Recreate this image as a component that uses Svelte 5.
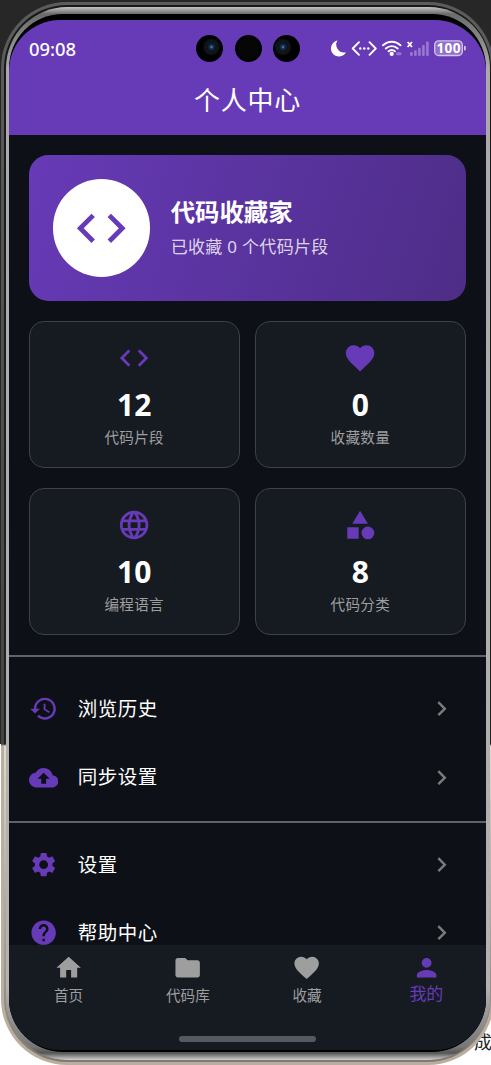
<script>
  const purple = '#673ab7';

  // 图标路径 (24x24)
  const icons = {
    code: 'M9.4 16.6L4.8 12l4.6-4.6L8 6l-6 6 6 6 1.4-1.4zm5.2 0l4.6-4.6-4.6-4.6L16 6l6 6-6 6-1.4-1.4z',
    heart: 'M12 21.35l-1.45-1.32C5.4 15.36 2 12.28 2 8.5 2 5.42 4.42 3 7.5 3c1.74 0 3.41.81 4.5 2.09C13.09 3.81 14.76 3 16.5 3 19.58 3 22 5.42 22 8.5c0 3.78-3.4 6.86-8.55 11.54L12 21.35z',
    globe: 'M11.99 2C6.47 2 2 6.48 2 12s4.47 10 9.99 10C17.52 22 22 17.52 22 12S17.52 2 11.99 2zm6.93 6h-2.95c-.32-1.25-.78-2.45-1.38-3.56 1.84.63 3.37 1.91 4.33 3.56zM12 4.04c.83 1.2 1.48 2.53 1.91 3.96h-3.82c.43-1.43 1.08-2.76 1.91-3.96zM4.26 14C4.1 13.36 4 12.69 4 12s.1-1.36.26-2h3.38c-.08.66-.14 1.32-.14 2s.06 1.34.14 2H4.26zm.82 2h2.95c.32 1.25.78 2.45 1.38 3.56-1.84-.63-3.37-1.9-4.33-3.56zm2.95-8H5.08c.96-1.66 2.49-2.93 4.33-3.56C8.81 5.55 8.35 6.75 8.03 8zM12 19.96c-.83-1.2-1.48-2.53-1.91-3.96h3.82c-.43 1.43-1.08 2.76-1.91 3.96zM14.34 14H9.66c-.09-.66-.16-1.32-.16-2s.07-1.35.16-2h4.68c.09.65.16 1.32.16 2s-.07 1.34-.16 2zm.25 5.56c.6-1.11 1.06-2.31 1.38-3.56h2.95c-.96 1.65-2.49 2.93-4.33 3.56zM16.36 14c.08-.66.14-1.32.14-2s-.06-1.34-.14-2h3.38c.16.64.26 1.31.26 2s-.1 1.36-.26 2h-3.38z',
    category: 'M12 2l-5.5 9h11zM17.5 13a4.5 4.5 0 1 0 0 9 4.5 4.5 0 0 0 0-9zM3 13.5h8v8H3z',
    history: 'M13 3c-4.97 0-9 4.03-9 9H1l3.89 3.89.07.14L9 12H6c0-3.87 3.13-7 7-7s7 3.13 7 7-3.13 7-7 7c-1.93 0-3.68-.79-4.94-2.06l-1.42 1.42C8.27 19.99 10.51 21 13 21c4.97 0 9-4.03 9-9s-4.03-9-9-9zm-1 5v5l4.28 2.54.72-1.21-3.5-2.08V8H12z',
    cloud: 'M19.35 10.04C18.67 6.59 15.64 4 12 4 9.11 4 6.6 5.64 5.35 8.04 2.34 8.36 0 10.91 0 14c0 3.31 2.69 6 6 6h13c2.76 0 5-2.24 5-5 0-2.64-2.05-4.78-4.65-4.96zM14 13v4h-4v-4H7l5-5 5 5h-3z',
    settings: 'M19.14 12.94c.04-.3.06-.61.06-.94 0-.32-.02-.64-.07-.94l2.03-1.58c.18-.14.23-.41.12-.61l-1.92-3.32c-.12-.22-.37-.29-.59-.22l-2.39.96c-.5-.38-1.03-.7-1.62-.94l-.36-2.54c-.04-.24-.24-.41-.48-.41h-3.84c-.24 0-.43.17-.47.41l-.36 2.54c-.59.24-1.13.57-1.62.94l-2.39-.96c-.22-.08-.47 0-.59.22L2.74 8.87c-.12.21-.08.47.12.61l2.03 1.58c-.05.3-.09.63-.09.94s.02.64.07.94l-2.03 1.58c-.18.14-.23.41-.12.61l1.92 3.32c.12.22.37.29.59.22l2.39-.96c.5.38 1.03.7 1.62.94l.36 2.54c.05.24.24.41.48.41h3.84c.24 0 .44-.17.47-.41l.36-2.54c.59-.24 1.13-.56 1.62-.94l2.39.96c.22.08.47 0 .59-.22l1.92-3.32c.12-.22.07-.47-.12-.61l-2.01-1.58zM12 15.6c-1.98 0-3.6-1.62-3.6-3.6s1.62-3.6 3.6-3.6 3.6 1.62 3.6 3.6-1.62 3.6-3.6 3.6z',
    help: 'M12 2C6.48 2 2 6.48 2 12s4.48 10 10 10 10-4.48 10-10S17.52 2 12 2zm1 17h-2v-2h2v2zm2.07-7.75l-.9.92C13.45 12.9 13 13.5 13 15h-2v-.5c0-1.1.45-2.1 1.17-2.83l1.24-1.26c.37-.36.59-.86.59-1.41 0-1.1-.9-2-2-2s-2 .9-2 2H8c0-2.21 1.79-4 4-4s4 1.79 4 4c0 .88-.36 1.68-.93 2.25z',
    home: 'M10 20v-6h4v6h5v-8h3L12 3 2 12h3v8z',
    folder: 'M10 4H4c-1.1 0-1.99.9-1.99 2L2 18c0 1.1.9 2 2 2h16c1.1 0 2-.9 2-2V8c0-1.1-.9-2-2-2h-8l-2-2z',
    person: 'M12 12c2.21 0 4-1.79 4-4s-1.79-4-4-4-4 1.79-4 4 1.79 4 4 4zm0 2c-2.67 0-8 1.34-8 4v2h16v-2c0-2.66-5.33-4-8-4z',
    chevron: 'M10 6L8.59 7.41 13.17 12l-4.58 4.59L10 18l6-6z'
  };

  const stats = [
    { icon: 'code', value: 12, label: '代码片段' },
    { icon: 'heart', value: 0, label: '收藏数量' },
    { icon: 'globe', value: 10, label: '编程语言' },
    { icon: 'category', value: 8, label: '代码分类' }
  ];

  const menus = [
    [
      { icon: 'history', label: '浏览历史' },
      { icon: 'cloud', label: '同步设置' }
    ],
    [
      { icon: 'settings', label: '设置' },
      { icon: 'help', label: '帮助中心' }
    ]
  ];

  const tabs = [
    { icon: 'home', label: '首页' },
    { icon: 'folder', label: '代码库' },
    { icon: 'heart', label: '收藏' },
    { icon: 'person', label: '我的' }
  ];

  let activeTab = 3;
</script>

{#snippet icon(name, size, color)}
  <svg width={size} height={size} viewBox="0 0 24 24" fill={color}>
    <path d={icons[name]} />
  </svg>
{/snippet}

<div class="desktop">
  <span class="behind">成</span>
  <div class="rim">
    <div class="groove">
      <div class="metal">
        <div class="bezel">
          <div class="screen">
            <header>
              <div class="status">
                <span class="time">09:08</span>
                <svg width="140" height="20" viewBox="0 0 140 20">
                  <path fill="#fff" d="M8.5 1.6A8 8 0 1 0 17 13.3A7.8 7.8 0 0 1 8.5 1.6z" />
                  <g fill="none" stroke="#fff" stroke-width="1.9" stroke-linecap="round" stroke-linejoin="round">
                    <path d="M30 3.2L23.7 9.5L30 15.8M40.5 3.2L46.8 9.5L40.5 15.8" />
                    <path d="M54 6.3C59 1.5 66.5 1.5 71.5 6.3M56.8 9.5C60.2 6.3 65.3 6.3 68.7 9.5M59.6 12.3C61.4 10.8 64.1 10.8 65.9 12.3" />
                  </g>
                  <g fill="#fff">
                    <circle cx="31.3" cy="9.5" r="1.2" />
                    <circle cx="35.3" cy="9.5" r="1.2" />
                    <circle cx="39.3" cy="9.5" r="1.2" />
                    <circle cx="62.7" cy="14.9" r="2.1" />
                  </g>
                  <rect x="67" y="13.3" width="5.5" height="3" rx="1.5" fill="#fff" opacity=".3" />
                  <path d="M78.6 3l4.4 5M83 3l-4.4 5" stroke="#fff" stroke-width="1.8" />
                  <g fill="#fff" opacity=".32">
                    <rect x="81.1" y="13" width="2.6" height="4" rx="1" />
                    <rect x="85.1" y="11.2" width="2.6" height="5.8" rx="1" />
                    <rect x="89.1" y="8.8" width="2.6" height="8.2" rx="1" />
                    <rect x="93.1" y="6" width="2.6" height="11" rx="1" />
                    <rect x="97.1" y="2.4" width="2.6" height="14.6" rx="1" />
                  </g>
                  <rect x="105.7" y="1.9" width="27.6" height="14.6" rx="4" fill="#fff" fill-opacity=".28" stroke="#d3c6ec" stroke-width="1.3" />
                  <rect x="135" y="6.8" width="1.8" height="4.6" rx=".9" fill="#d3c6ec" />
                  <text x="119.5" y="14.1" text-anchor="middle" fill="#fff" font-size="13.6" font-weight="700" textLength="24">100</text>
                </svg>
              </div>
              <h1>个人中心</h1>
              <i class="lens left"></i>
              <i class="lens mid"></i>
              <i class="lens right"></i>
            </header>

            <main>
              <section class="profile">
                <div class="avatar">{@render icon('code', 58.5, purple)}</div>
                <div>
                  <h2>代码收藏家</h2>
                  <p>已收藏 0 个代码片段</p>
                </div>
              </section>

              <section class="stats">
                {#each stats as stat}
                  <div class="stat">
                    {@render icon(stat.icon, 34.2, purple)}
                    <strong>{stat.value}</strong>
                    <span>{stat.label}</span>
                  </div>
                {/each}
              </section>

              {#each menus as group}
                <ul>
                  {#each group as item}
                    <li>
                      {@render icon(item.icon, 29.3, purple)}
                      <span>{item.label}</span>
                      {@render icon('chevron', 29.3, '#7b7b7c')}
                    </li>
                  {/each}
                </ul>
              {/each}
            </main>

            <nav>
              <div class="tabs">
                {#each tabs as tab, i}
                  <button class:active={i === activeTab}>
                    {@render icon(tab.icon, 29.3, i === activeTab ? purple : '#9e9e9e')}
                    <span>{tab.label}</span>
                  </button>
                {/each}
              </div>
              <div class="handle"></div>
            </nav>
          </div>
        </div>
      </div>
    </div>
  </div>
</div>

<style>
  .desktop {
    position: relative;
    width: 491px;
    height: 1065px;
    box-sizing: border-box;
    padding: 2px 0 0 1px;
    overflow: hidden;
    background: linear-gradient(#272727 744px, #fff 744px);
    font-family: "Noto Sans", "Noto Sans CJK SC", sans-serif;
    color: #fff;
  }
  .behind {
    position: absolute;
    left: 474px;
    top: 1031px;
    font-size: 18px;
    line-height: 22px;
    color: #222;
  }
  /* 手机外框 */
  .rim {
    position: relative;
    width: 493px;
    height: 1062.5px;
    box-sizing: border-box;
    padding: 3px;
    border-radius: 66px;
    background: linear-gradient(#5c5c5c, #444 742px, #b9ae9f 744px, #b9ae9f);
  }
  .groove {
    height: 100%;
    box-sizing: border-box;
    padding: 1.5px;
    border-radius: 63px;
    background: linear-gradient(#181818, #222 739px, #e2dacd 741px, #817a70);
  }
  .metal {
    height: 100%;
    box-sizing: border-box;
    padding: 7px 3.5px 8px;
    border-radius: 61px;
    background: linear-gradient(#c4c4c4, #6b6b6b 7px, #aaa8a8 60px, #b4b1b1 980px, #777 1040px, #555 1046px, #d0d0d0);
  }
  .bezel {
    height: 100%;
    box-sizing: border-box;
    padding: 6.5px 0 2.5px;
    border-radius: 54px;
    background: #000;
  }
  .screen {
    display: flex;
    flex-direction: column;
    height: 100%;
    border-radius: 51px;
    overflow: hidden;
    background: #0d1117;
  }
  header {
    position: relative;
    flex: none;
    height: 115.4px;
    background: #673ab7;
  }
  .status {
    display: flex;
    justify-content: space-between;
    align-items: center;
    height: 38px;
    padding: 10px 17px 0 20px;
  }
  .time {
    font-size: 18.4px;
    line-height: 20px;
    font-weight: 500;
  }
  .lens {
    position: absolute;
    top: 15px;
    width: 27px;
    height: 27px;
    border-radius: 50%;
    background: #000;
  }
  .left {
    left: 187px;
    background: radial-gradient(circle at 15.5px 12px, #5a9ccb 0, #16395f 1.5px, #0d1520 4px, #131316 7px, #000 9px);
  }
  .mid {
    left: 225.5px;
    background: radial-gradient(#060606 55%, #000 60%);
  }
  .right {
    left: 263.5px;
    background: radial-gradient(circle at 10px 12px, #5a9ccb 0, #16395f 1.5px, #0d1520 4px, #131316 7px, #000 9px);
  }
  h1 {
    margin: 12px 0 0;
    font-size: 26px;
    line-height: 40px;
    font-weight: 400;
    letter-spacing: .8px;
    text-align: center;
  }
  main {
    flex: 1;
    min-height: 0;
    overflow: hidden;
  }
  .profile {
    display: flex;
    align-items: center;
    gap: 20.3px;
    height: 146.3px;
    box-sizing: border-box;
    margin: 19.5px 20px 0 19.5px;
    padding: 0 24.4px;
    border-radius: 19.5px;
    background: linear-gradient(108deg, #673ab7, #4d2d87);
  }
  .avatar {
    display: flex;
    align-items: center;
    justify-content: center;
    width: 97.5px;
    height: 97.5px;
    border-radius: 50%;
    background: #fff;
  }
  h2 {
    margin: 1px 0 0;
    font-size: 24.4px;
    line-height: 34px;
    font-weight: 700;
  }
  .profile p {
    margin: 3px 0 0;
    font-size: 17px;
    line-height: 30px;
    letter-spacing: .3px;
    color: rgba(255, 255, 255, .8);
  }
  .stats {
    display: grid;
    grid-template-columns: 1fr 1fr;
    gap: 20px 14.6px;
    padding: 19.6px 20px 20px 19.5px;
  }
  .stat {
    display: flex;
    flex-direction: column;
    align-items: center;
    height: 147px;
    box-sizing: border-box;
    padding-top: 19px;
    border: 1px solid #3f4143;
    border-radius: 15px;
    background: #161b22;
  }
  .stat strong {
    margin-top: 12px;
    font-size: 30px;
    line-height: 36px;
    font-weight: 700;
  }
  .stat span {
    margin-top: 4px;
    font-size: 14.6px;
    line-height: 20px;
    letter-spacing: .3px;
    color: #9e9e9e;
  }
  ul {
    margin: 0;
    padding: 18px 0 9.5px;
    border-top: 2px solid #616266;
    list-style: none;
  }
  li {
    display: flex;
    align-items: center;
    height: 68.3px;
    padding: 0 29.8px 0 19.5px;
  }
  li span {
    flex: 1;
    margin: -3px 0 0 20px;
    font-size: 19.5px;
    letter-spacing: .5px;
  }
  ul + ul {
    padding-top: 7.6px;
  }
  nav {
    flex: none;
    height: 105px;
    background: #161b22;
  }
  .tabs {
    display: flex;
  }
  button {
    flex: 1;
    display: flex;
    flex-direction: column;
    align-items: center;
    height: 91px;
    box-sizing: border-box;
    padding: 8px 0 0;
    border: 0;
    background: none;
    color: #9e9e9e;
    font-family: inherit;
    font-size: 14.6px;
  }
  button span {
    margin-top: 2.5px;
    line-height: 22px;
  }
  .active {
    color: #673ab7;
    font-size: 17px;
  }
  .active span {
    margin-top: 1px;
  }
  .handle {
    width: 137px;
    height: 6px;
    margin: 0 auto;
    border-radius: 3px;
    background: #555a61;
  }
</style>
